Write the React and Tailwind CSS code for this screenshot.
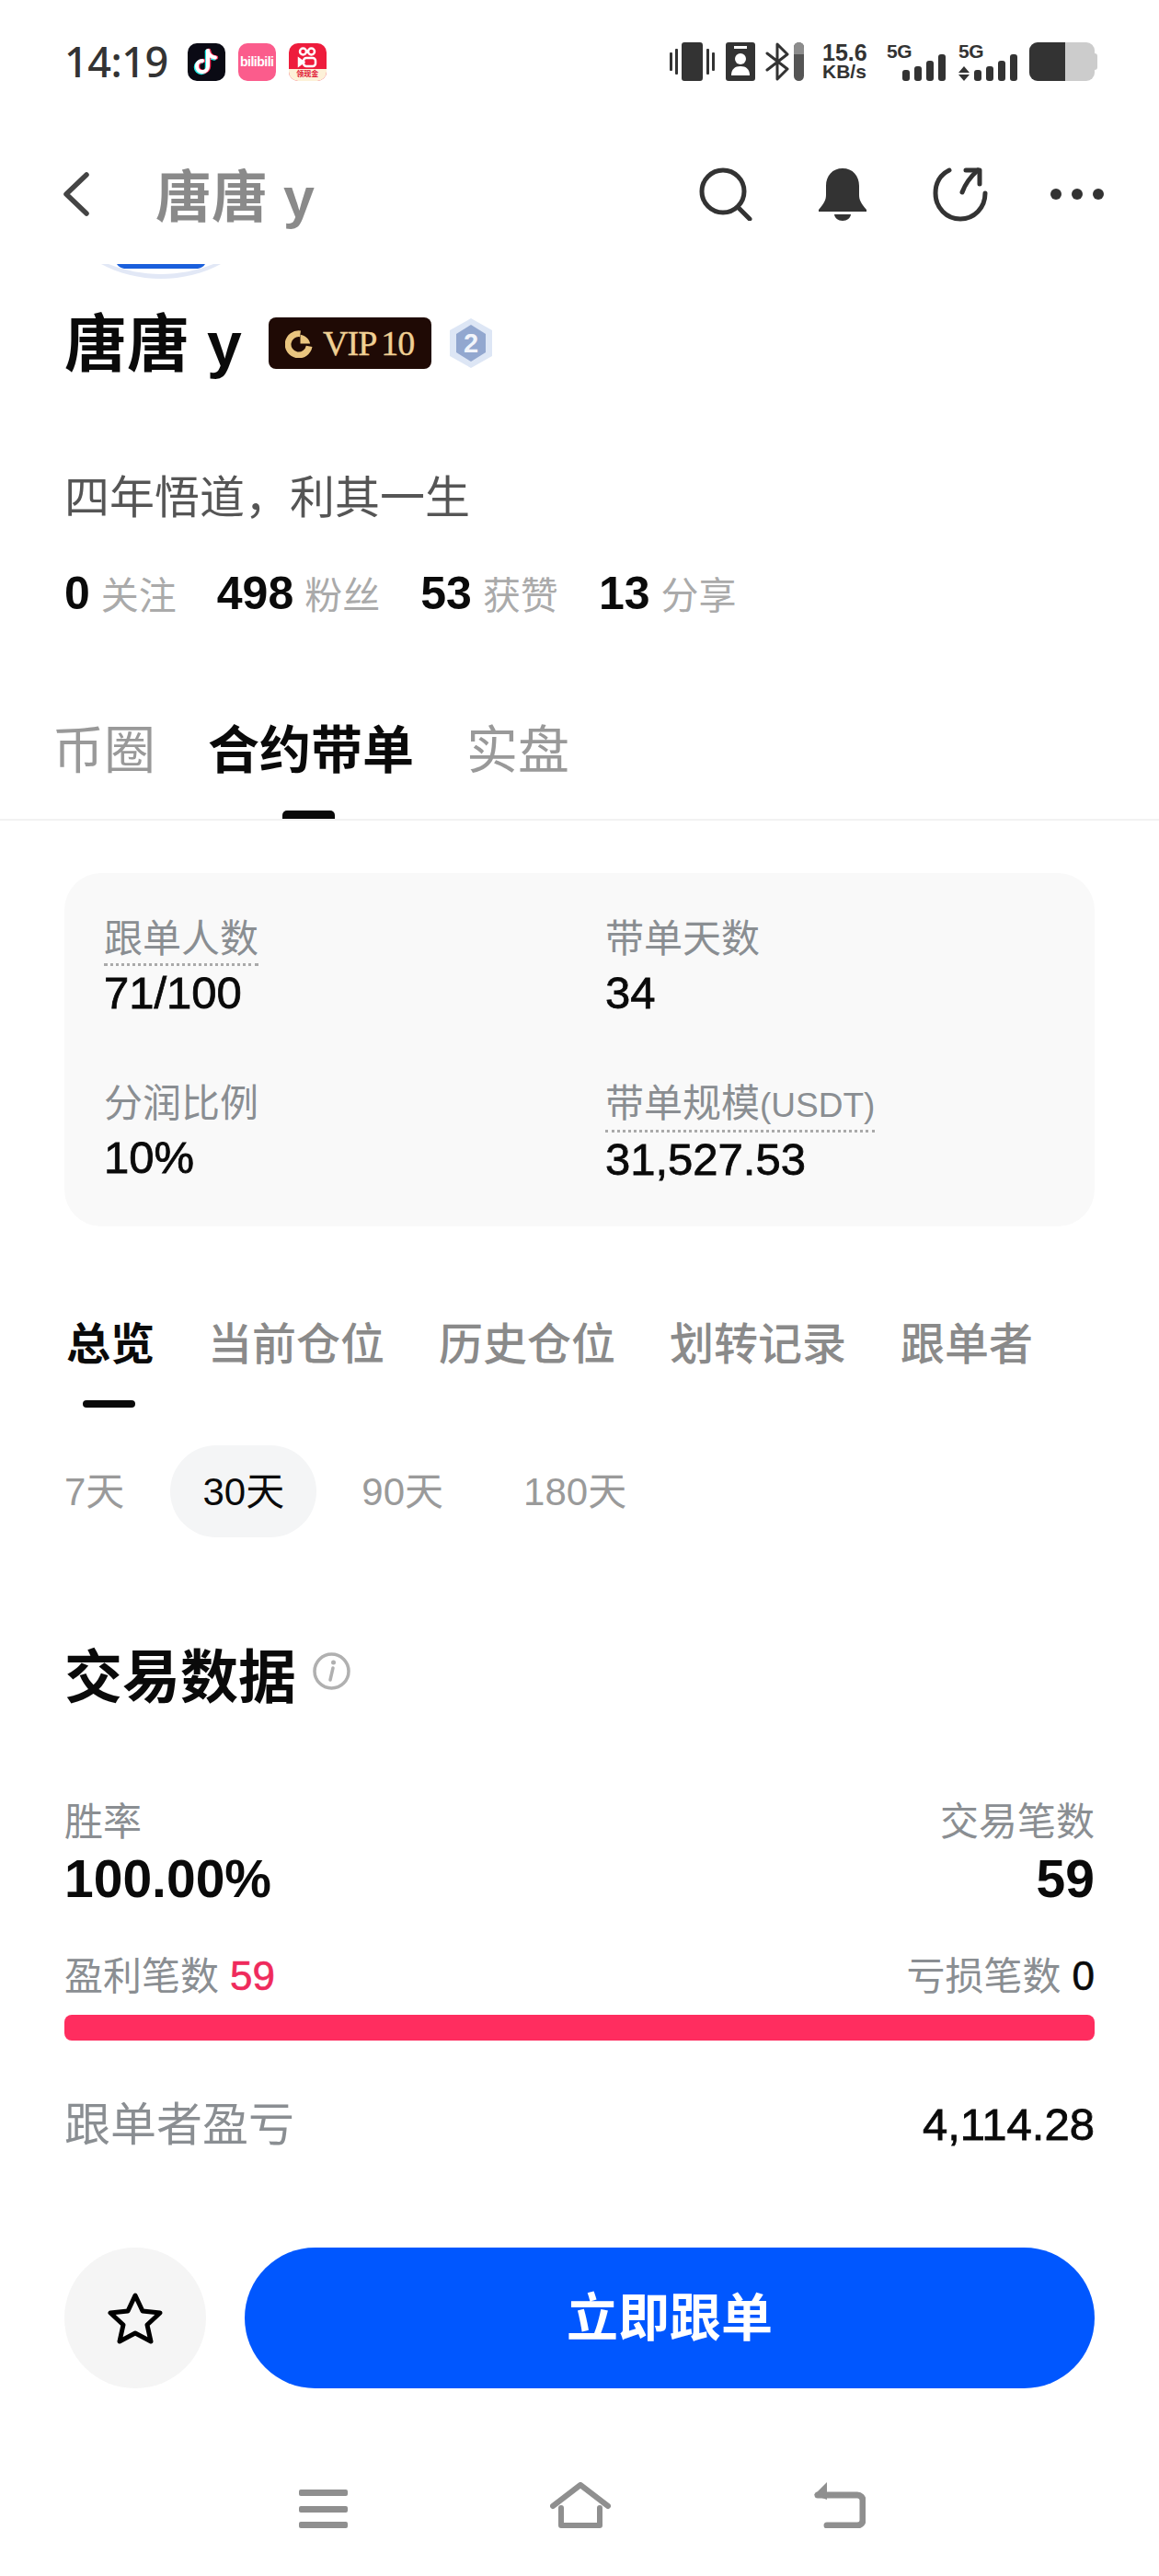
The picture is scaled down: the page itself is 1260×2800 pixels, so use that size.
import React from "react";

function AppIcons() {
  return (
    <div className="flex items-center gap-[14px] ml-[21px]">
      <div className="w-[41px] h-[41px] rounded-[10px] bg-[#0a0a14] flex items-center justify-center">
        <svg width="30" height="32" viewBox="0 0 30 32" fill="none" strokeLinecap="round">
          <path d="M17 4v17a6 6 0 1 1-6-6" stroke="#25f4ee" strokeWidth="4.5" transform="translate(-1 1)" />
          <path d="M17 4c.5 4 3.500 7 8 7.500" stroke="#25f4ee" strokeWidth="4.500" transform="translate(-1 1)" />
          <path d="M17 4v17a6 6 0 1 1-6-6" stroke="#fe2c55" strokeWidth="4.5" transform="translate(1 0)" />
          <path d="M17 4c.5 4 3.500 7 8 7.500" stroke="#fe2c55" strokeWidth="4.500" transform="translate(1 0)" />
          <path d="M17 4v17a6 6 0 1 1-6-6" stroke="#fff" strokeWidth="4" />
          <path d="M17 4c.5 4 3.500 7 8 7.500" stroke="#fff" strokeWidth="4" />
        </svg>
      </div>
      <div className="w-[41px] h-[41px] rounded-[10px] bg-[#fb5c8c] flex items-center justify-center overflow-hidden">
        <span className="text-[14px] font-bold text-white tracking-[-0.5px]">bilibili</span>
      </div>
      <div className="w-[41px] h-[41px] rounded-[10px] bg-[#ee1c3c] flex flex-col items-center overflow-hidden">
        <svg className="mt-[4px]" width="22" height="24" viewBox="0 0 22 24" fill="none" stroke="#fff" strokeWidth="2.500">
          <circle cx="6.500" cy="5" r="3.500" />
          <circle cx="15.500" cy="5" r="3.500" />
          <rect x="7" y="12" width="13" height="9" rx="3" />
          <path d="M7 16.500 2 13v7z" fill="#fff" />
        </svg>
        <div className="w-full h-[13px] bg-[#fdf1d8] flex items-center justify-center">
          <span className="text-[8px] leading-none font-bold text-[#e01030]">领现金</span>
        </div>
      </div>
    </div>
  );
}

function Signal({ arrows }) {
  const hs = [12, 16, 22, 29];
  return (
    <div className="relative w-[64px] h-[42px] flex items-end justify-end gap-[5px]">
      <span className="absolute left-0 top-[-3px] text-[21px] leading-[26px] font-bold text-[#333] tracking-[-0.5px]">5G</span>
      {arrows && (
        <svg className="absolute left-0 bottom-0" width="12" height="16" viewBox="0 0 12 16" fill="#333">
          <path d="M6 0 12 7H0zM6 16 0 9h12z" />
        </svg>
      )}
      {hs.map((h, i) => (
        <span key={i} className="w-[8px] rounded-[3px] bg-[#333]" style={{ height: h }} />
      ))}
    </div>
  );
}

function StatusBar() {
  return (
    <div className="h-[136px] px-[70px] pt-[46px] flex items-start justify-between">
      <div className="flex items-center h-[42px]">
        <span className="text-[45px] leading-[42px] font-medium text-[#333] font-['Noto_Sans',sans-serif] tracking-[-0.5px]">14:19</span>
        <AppIcons />
      </div>
      <div className="flex items-center h-[42px] text-[#333] -mr-[3px]">
        <svg width="49" height="42" viewBox="0 0 49 42" fill="#333">
          <rect x="13" y="0" width="23" height="42" rx="3" />
          <rect x="0" y="11" width="3" height="20" rx="1" />
          <rect x="6" y="7" width="3" height="28" rx="1" />
          <rect x="40" y="7" width="3" height="28" rx="1" />
          <rect x="46" y="11" width="3" height="20" rx="1" />
        </svg>
        <svg className="ml-[12px]" width="32" height="42" viewBox="0 0 32 42">
          <rect width="32" height="42" rx="3" fill="#333" />
          <rect x="9" y="4" width="14" height="3" fill="#fff" />
          <circle cx="16" cy="18" r="6" fill="#fff" />
          <path d="M6 36c0-7 4-10 10-10s10 3 10 10z" fill="#fff" />
        </svg>
        <svg className="ml-[11px]" width="26" height="42" viewBox="0 0 26 42" fill="none" stroke="#333" strokeWidth="3" strokeLinejoin="round" strokeLinecap="round">
          <path d="M2 12 24 29 13 40V2l11 11L2 30" />
        </svg>
        <div className="ml-[5px] w-[11px] h-[42px] rounded-full overflow-hidden bg-[#555] flex flex-col">
          <div className="h-[13px] bg-[#8c8c8c]" />
        </div>
        <div className="ml-[20px] w-[50px] flex flex-col items-start font-bold text-[#333]">
          <span className="text-[25px] leading-[22px]">15.6</span>
          <span className="text-[21px] leading-[20px] whitespace-nowrap">KB/s</span>
        </div>
        <div className="ml-[20px]"><Signal /></div>
        <div className="ml-[14px]"><Signal arrows /></div>
        <div className="ml-[13px] flex items-center">
          <div className="w-[71px] h-[42px] rounded-[9px] overflow-hidden bg-[#cccccc] flex">
            <div className="w-[39px] h-full bg-[#333]" />
          </div>
          <div className="w-[3px] h-[18px] rounded-r-[3px] bg-[#cccccc]" />
        </div>
      </div>
    </div>
  );
}

function Header() {
  return (
    <div className="h-[150px] px-[60px] flex items-center justify-between">
      <div className="flex items-center">
        <svg className="ml-[8px]" width="30" height="48" viewBox="0 0 30 48" fill="none" stroke="#444" strokeWidth="5.500" strokeLinecap="round" strokeLinejoin="round">
          <path d="M26 3 4 24l22 21" />
        </svg>
        <span className="ml-[71px] mt-[8px] text-[61px] leading-[70px] font-bold text-[#8a8a8a]">唐唐 y</span>
      </div>
      <div className="flex items-center">
        <svg width="58" height="58" viewBox="0 0 58 58" fill="none" stroke="#333" strokeWidth="5" strokeLinecap="round">
          <circle cx="26" cy="26" r="23" />
          <path d="M43 44 55 56" />
        </svg>
        <svg className="ml-[72px]" width="52" height="58" viewBox="0 0 52 58" fill="#333">
          <path d="M26 1c-11 0-18 8-18 19v10c0 5-2 9-8 16v2h52v-2c-6-7-8-11-8-16V20C44 9 37 1 26 1z" />
          <path d="M17 51h18c-.5 4-4 7-9 7s-8.500-3-9-7z" />
        </svg>
        <svg className="ml-[72px]" width="60" height="60" viewBox="0 0 60 60" fill="none" stroke="#333" strokeWidth="5" strokeLinecap="round" strokeLinejoin="round">
          <path d="M18 4C8 9 3 18 3 29c0 16 12 28 27 28s27-12 27-28" />
          <path d="M32 28c3-8 8-16 17-24" />
          <path d="M36 4h15v15" />
        </svg>
        <div className="ml-[68px] flex gap-[11px]">
          <span className="w-[12px] h-[12px] rounded-full bg-[#333]" />
          <span className="w-[12px] h-[12px] rounded-full bg-[#333]" />
          <span className="w-[12px] h-[12px] rounded-full bg-[#333]" />
        </div>
      </div>
    </div>
  );
}

function Stat({ n, label }) {
  return (
    <div className="flex items-baseline gap-[12px]">
      <span className="text-[50px] font-bold text-[#0a0a0a]">{n}</span>
      <span className="text-[41px] text-[#aaaaaa]">{label}</span>
    </div>
  );
}

function Profile() {
  return (
    <div className="h-[443px] px-[70px]">
      <svg className="ml-[40px] block" width="130" height="17" viewBox="0 0 130 17">
        <path d="M0 1h130C112 11 88 17 65 17S18 11 0 1z" fill="#e2e8f6" />
        <path d="M8 1h114C104 8 85 12 65 12S26 8 8 1z" fill="#fff" />
        <path d="M17 1h96c-2 3-4 4-8 5H25c-4-1-6-2-8-5z" fill="#1a5fdc" />
      </svg>
      <div className="flex items-center h-[96px] mt-[23px]">
        <span className="text-[68px] leading-[80px] font-bold text-[#0a0a0a]">唐唐 y</span>
        <div className="ml-[29px] -mt-[2px] w-[177px] h-[56px] rounded-[8px] bg-[#1f0a05] flex items-center justify-center gap-[10px]">
          <svg width="31" height="31" viewBox="0 0 32 32" fill="none">
            <path d="M27 19a12 12 0 1 1-10-14" stroke="#eac57f" strokeWidth="7" />
            <path d="M17 16V6c6 1 10 5 11 10z" fill="#eac57f" />
          </svg>
          <span className="text-[38px] leading-[40px] font-['Liberation_Serif',serif] text-[#f0d094] whitespace-nowrap tracking-[-1px] [-webkit-text-stroke:0.4px_#f0d094]">
            VIP<span className="ml-[5px]">10</span>
          </span>
        </div>
        <svg className="ml-[18px] -mt-[2px]" width="50" height="56" viewBox="0 0 50 56">
          <path d="M25 1 48 14v28L25 55 2 42V14z" fill="#dde6f5" />
          <path d="M25 8 41 18v20L25 48 9 38V18z" fill="#92a7cf" />
          <text x="25" y="38" textAnchor="middle" fontSize="29" fontWeight="700" fill="#f2f5fb" fontFamily="Liberation Sans, sans-serif">2</text>
        </svg>
      </div>
      <p className="mt-[89px] text-[49px] leading-[60px] text-[#555]">{"四年悟道\uFF0C利其一生"}</p>
      <div className="mt-[44px] h-[60px] flex items-center gap-[44px]">
        <Stat n="0" label="关注" />
        <Stat n="498" label="粉丝" />
        <Stat n="53" label="获赞" />
        <Stat n="13" label="分享" />
      </div>
    </div>
  );
}

function MainTabs() {
  return (
    <div className="h-[220px] pt-[50px]">
      <div className="relative h-[113px] border-b-2 border-[#f2f2f2] pt-[2px] pl-[57px] flex gap-[57px] text-[56px] leading-[70px]">
        <span className="text-[#999]">币圈</span>
        <span className="font-bold text-[#0a0a0a]">合约带单</span>
        <span className="text-[#999]">实盘</span>
        <span className="absolute left-[307px] bottom-0 w-[57px] h-[9px] rounded-t-[5px] bg-[#0a0a0a]" />
      </div>
    </div>
  );
}

function Cell({ label, unit, value, dotted }) {
  return (
    <div className="flex flex-col">
      <span className={`self-start text-[42px] leading-[52px] text-[#8a8e92] ${dotted ? "border-b-[3px] border-dotted border-[#aaa]" : ""}`}>
        {label}
        {unit && <span className="text-[37px]">{unit}</span>}
      </span>
      <span className={`text-[49px] leading-[58px] text-[#0a0a0a] [-webkit-text-stroke:0.8px_#0a0a0a] ${dotted ? "" : "mt-[3px]"}`}>{value}</span>
    </div>
  );
}

function InfoCard() {
  return (
    <div className="mx-[70px] h-[384px] rounded-[40px] bg-[#f9f9f9] pl-[43px] pt-[46px] grid grid-cols-[545px_1fr] gap-y-[66px] content-start">
      <Cell label="跟单人数" value="71/100" dotted />
      <Cell label="带单天数" value="34" />
      <Cell label="分润比例" value="10%" />
      <Cell label="带单规模" unit="(USDT)" value="31,527.53" dotted />
    </div>
  );
}

function SubTabs() {
  return (
    <div className="mt-[94px] h-[100px] px-[72px] flex gap-[59px] text-[48px] leading-[70px] font-medium text-[#8a8a8a] whitespace-nowrap">
      <div className="relative w-[95px]">
        <span className="font-bold text-[#0a0a0a]">总览</span>
        <span className="absolute left-[18px] top-[95px] w-[57px] h-[8px] rounded-full bg-[#0a0a0a]" />
      </div>
      <span>当前仓位</span>
      <span>历史仓位</span>
      <span>划转记录</span>
      <span>跟单者</span>
    </div>
  );
}

function Range() {
  return (
    <div className="mt-[44px] h-[100px] px-[70px] flex items-center text-[42px] text-[#9a9a9a]">
      <span>7天</span>
      <span className="ml-[50px] w-[159px] h-[100px] rounded-full bg-[#f4f5f6] text-[#0a0a0a] flex items-center justify-center">30天</span>
      <span className="ml-[49px]">90天</span>
      <span className="ml-[87px]">180天</span>
    </div>
  );
}

function TradeData() {
  return (
    <div className="px-[70px]">
      <div className="mt-[112px] h-[80px] flex items-center">
        <span className="text-[63px] leading-[80px] font-bold text-[#0a0a0a]">交易数据</span>
        <svg className="ml-[18px] mb-[14px]" width="41" height="41" viewBox="0 0 41 41" fill="none">
          <circle cx="20.500" cy="20.500" r="18.500" stroke="#b0b0b0" strokeWidth="3.500" />
          <circle cx="22.500" cy="11" r="2.500" fill="#b0b0b0" />
          <path d="M22 17l-3 13" stroke="#b0b0b0" strokeWidth="3.500" strokeLinecap="round" />
        </svg>
      </div>
      <div className="mt-[92px] flex justify-between">
        <div className="flex flex-col">
          <span className="text-[42px] leading-[52px] text-[#8a8e92]">胜率</span>
          <span className="mt-[2px] text-[57px] leading-[66px] font-bold text-[#0a0a0a]">100.00%</span>
        </div>
        <div className="flex flex-col items-end">
          <span className="text-[42px] leading-[52px] text-[#8a8e92]">交易笔数</span>
          <span className="mt-[2px] text-[57px] leading-[66px] font-bold text-[#0a0a0a]">59</span>
        </div>
      </div>
      <div className="mt-[47px] h-[52px] flex items-center justify-between text-[42px]">
        <div className="flex items-center gap-[12px]">
          <span className="text-[#8a8e92]">盈利笔数</span>
          <span className="text-[44px] text-[#ef2a5c] [-webkit-text-stroke:0.6px_#ef2a5c]">59</span>
        </div>
        <div className="flex items-center gap-[12px]">
          <span className="text-[#8a8e92]">亏损笔数</span>
          <span className="text-[44px] text-[#0a0a0a] [-webkit-text-stroke:0.6px_#0a0a0a]">0</span>
        </div>
      </div>
      <div className="mt-[16px] h-[28px] rounded-[8px] bg-[#ff2d5f]" />
      <div className="mt-[60px] h-[64px] flex items-center justify-between">
        <span className="text-[50px] text-[#8a8e92]">跟单者盈亏</span>
        <span className="text-[49px] text-[#0a0a0a] [-webkit-text-stroke:0.8px_#0a0a0a]">4,114.28</span>
      </div>
    </div>
  );
}

function Actions() {
  return (
    <div className="mt-[101px] px-[70px] flex gap-[42px]">
      <div className="w-[154px] h-[153px] rounded-full bg-[#f5f5f5] flex items-center justify-center">
        <svg width="60" height="56" viewBox="0 0 60 56" fill="none" stroke="#000" strokeWidth="5" strokeLinejoin="round">
          <path d="M30 3 38 20 57 22 43 35 47 53 30 44 13 53 17 35 3 22 22 20z" />
        </svg>
      </div>
      <div className="flex-1 h-[153px] rounded-full bg-[#0057ff] flex items-center justify-center">
        <span className="text-[56px] font-bold text-white">立即跟单</span>
      </div>
    </div>
  );
}

function NavBar() {
  return (
    <div className="mt-[100px] h-[52px] flex items-end">
      <div className="ml-[325px] w-[53px] h-[42px] flex flex-col justify-between">
        <span className="h-[7px] rounded-[2px] bg-[#8f8f8f]" />
        <span className="h-[7px] rounded-[2px] bg-[#8f8f8f]" />
        <span className="h-[7px] rounded-[2px] bg-[#8f8f8f]" />
      </div>
      <svg className="ml-[220px]" width="66" height="50" viewBox="0 0 66 50" fill="none" stroke="#8f8f8f" strokeWidth="6" strokeLinecap="round" strokeLinejoin="round">
        <path d="M3 26 33 3l30 23" />
        <path d="M12 28v19h42V28" />
      </svg>
      <svg className="ml-[220px]" width="57" height="50" viewBox="0 0 57 50" fill="none">
        <path d="M5 14h43a6 6 0 0 1 6 6v21a6 6 0 0 1-6 6H15" stroke="#8f8f8f" strokeWidth="7" strokeLinecap="round" />
        <path d="M15 0 1 14l14 5z" fill="#8f8f8f" />
      </svg>
    </div>
  );
}

export default function App() {
  return (
    <div className="w-[1260px] h-[2800px] bg-white overflow-hidden font-['Liberation_Sans','Noto_Sans_CJK_SC',sans-serif]">
      <StatusBar />
      <Header />
      <Profile />
      <MainTabs />
      <InfoCard />
      <SubTabs />
      <Range />
      <TradeData />
      <Actions />
      <NavBar />
    </div>
  );
}
